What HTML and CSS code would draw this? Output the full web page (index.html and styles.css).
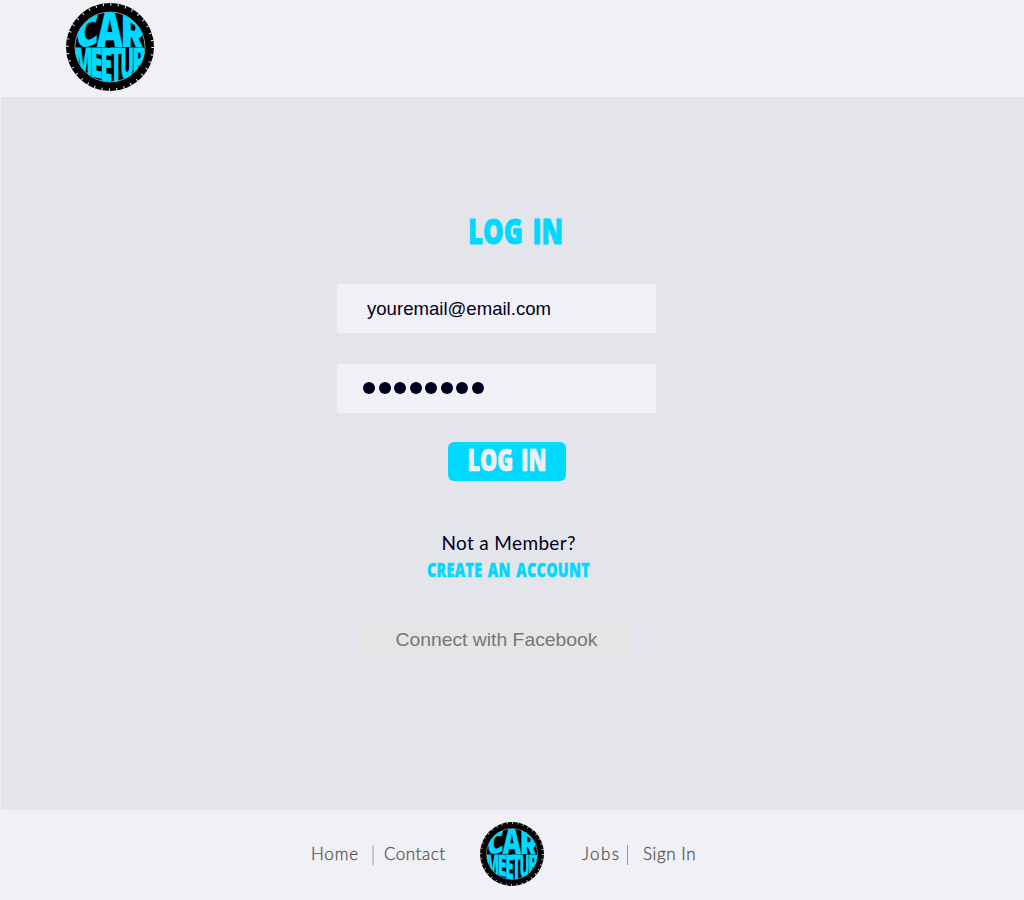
FILE: index.html
```html
<!DOCTYPE html>
<html lang="en">
<head>
<meta charset="utf-8">
<title>Car Meetup - Log In</title>
<link rel="stylesheet" href="styles.css">
</head>
<body>
<svg class="defs" width="0" height="0" aria-hidden="true">
  <defs>
    <clipPath id="upper"><path d="M27 132A105 105 0 0 1 237 132Z"/></clipPath>
    <clipPath id="lower"><path d="M27 133A105 105 0 0 0 237 133Z"/></clipPath>
    <symbol id="logo" viewBox="0 0 264 264">
      <circle cx="132" cy="132" r="132" fill="#000"/>
      <circle cx="132" cy="132" r="128" fill="none" stroke="#f0f0f5" stroke-width="8" stroke-dasharray="3 19.34"/>
      <circle cx="132" cy="132" r="105" fill="none" stroke="#d8d8d8" stroke-width="2"/>
      <g clip-path="url(#upper)" class="logo-type">
        <text transform="matrix(1 -.3 0 1.24 30 140)" textLength="68" lengthAdjust="spacingAndGlyphs">C</text>
        <text transform="matrix(1 0 0 1.46 93 132)" textLength="77" lengthAdjust="spacingAndGlyphs">A</text>
        <text transform="matrix(1 .42 0 1.44 163 127)" textLength="77" lengthAdjust="spacingAndGlyphs">R</text>
      </g>
      <g clip-path="url(#lower)" class="logo-type">
        <text transform="matrix(1 .15 0 1.2 24 210)" textLength="56" lengthAdjust="spacingAndGlyphs">M</text>
        <text transform="matrix(1 .25 0 1.28 72 218)" textLength="38" lengthAdjust="spacingAndGlyphs">E</text>
        <text transform="matrix(1 .12 0 1.4 103 232)" textLength="36" lengthAdjust="spacingAndGlyphs">E</text>
        <text transform="matrix(1 0 0 1.46 132 236)" textLength="37" lengthAdjust="spacingAndGlyphs">T</text>
        <text transform="matrix(1 -.25 0 1.35 163 233)" textLength="42" lengthAdjust="spacingAndGlyphs">U</text>
        <text transform="matrix(1 -.15 0 1.2 198 218)" textLength="42" lengthAdjust="spacingAndGlyphs">P</text>
      </g>
    </symbol>
  </defs>
</svg>
<header class="header">
  <svg class="logo" role="img" aria-label="Car Meetup"><use href="#logo"/></svg>
</header>
<main class="main">
  <svg class="title" viewBox="0 0 96 36"><text class="display title-text" x="0" y="31" textLength="95" lengthAdjust="spacingAndGlyphs">LOG IN</text></svg>
  <form class="form">
    <div class="field"><svg class="email" viewBox="0 0 190 30"><text x="0" y="21" textLength="184" lengthAdjust="spacingAndGlyphs">youremail@email.com</text></svg></div>
    <div class="field password"><i></i><i></i><i></i><i></i><i></i><i></i><i></i><i></i></div>
    <button class="login" type="button"><svg class="login-label" viewBox="0 0 80 39"><text class="display login-text" x="-0.5" y="29" textLength="79" lengthAdjust="spacingAndGlyphs">LOG IN</text></svg></button>
  </form>
  <svg class="signup" viewBox="0 0 166 52">
    <text class="member" x="14.5" y="20" textLength="134" lengthAdjust="spacing">Not a Member?</text>
    <text class="display create" x="0" y="47" textLength="163" lengthAdjust="spacingAndGlyphs">CREATE AN ACCOUNT</text>
  </svg>
  <button class="facebook" type="button"><svg class="facebook-label" viewBox="0 0 204 39"><text x="0.5" y="25.5" textLength="202" lengthAdjust="spacingAndGlyphs">Connect with Facebook</text></svg></button>
</main>
<footer class="footer">
  <nav class="links left">
    <svg class="home" viewBox="0 0 50 24"><text x="0" y="18" textLength="47">Home</text></svg>
    <span class="divider wide"></span>
    <svg class="contact" viewBox="0 0 62 24"><text x="0" y="18" textLength="61">Contact</text></svg>
  </nav>
  <svg class="logo small" role="img" aria-label="Car Meetup"><use href="#logo"/></svg>
  <nav class="links right">
    <svg class="jobs" viewBox="0 0 40 24"><text x="0" y="18" textLength="37">Jobs</text></svg>
    <span class="divider"></span>
    <svg class="sign" viewBox="0 0 56 24"><text x="0" y="18" textLength="52.5">Sign In</text></svg>
  </nav>
</footer>
</body>
</html>
```
FILE: styles.css
```css
* { box-sizing: border-box; }
body { margin: 0; height: 900px; display: flex; flex-direction: column; background: #f0f0f5; font-family: "Liberation Sans", sans-serif; overflow: hidden; }
svg { display: block; flex: none; overflow: visible; }
.defs { height: 0; }
.header { height: 97px; padding: 3px 0 0 66px; flex: none; }
.logo { width: 88px; height: 88px; }
.logo.small { width: 64px; height: 64px; margin-left: 34px; }
.logo-type { font: 800 100px "Open Sans", sans-serif; fill: #00d8ff; stroke: #00d8ff; stroke-width: 1px; }
.main { height: 713px; flex: none; margin-left: 1px; padding-top: 116px; background: #e4e5ea; }
.display { font-family: "Open Sans", sans-serif; font-weight: 800; fill: #00d8ff; }
.title { width: 96px; height: 36px; margin-left: 467px; }
.title-text { font-size: 36px; word-spacing: 4px; stroke: #00d8ff; stroke-width: .9px; }
.form { width: 319px; margin: 35px 0 0 336px; }
.field { height: 49px; margin-bottom: 31px; padding: 10px 0 0 30px; border-radius: 2px; background: #f0f0f5; }
.email { width: 190px; height: 30px; font-size: 19px; fill: #00001f; }
.password { display: flex; gap: 3.5px; margin-bottom: 29px; padding: 18px 0 0 26px; }
.password i { width: 12px; height: 12px; border-radius: 50%; background: #00001f; }
button { display: block; padding: 0; border: 0; }
.login { width: 118px; height: 39px; margin-left: 111px; padding-left: 19.5px; border-radius: 6px; background: #00d8ff; }
.login-label { width: 80px; height: 39px; }
.login-text { font-size: 29.5px; word-spacing: 3px; fill: #f0f0f5; stroke: #f0f0f5; stroke-width: .7px; }
.signup { width: 166px; height: 52px; margin: 49px 0 0 426px; }
.member { font: 19px Lato, sans-serif; fill: #00001f; }
.create { font-size: 19.5px; letter-spacing: .4px; word-spacing: 2px; stroke: #00d8ff; stroke-width: .4px; }
.facebook { width: 272px; height: 39px; margin: 38px 0 0 359px; padding-left: 35px; background: #e5e5e5; }
.facebook-label { width: 204px; height: 39px; font: 19px "Liberation Sans", sans-serif; fill: #777; }
.footer { display: flex; padding: 12px 0 0 311px; font: 300 17px Lato, sans-serif; fill: #555; }
.links text { stroke: #555; stroke-width: .3px; }
.links { display: flex; padding-top: 20px; }
.links svg { height: 24px; }
.divider { width: 1px; height: 20px; margin-top: 3px; background: #999; }
.divider.wide { width: 2px; background: #c8c8cc; }
.home { width: 50px; margin-right: 11px; }
.contact { width: 62px; margin-left: 10px; }
.right { margin-left: 38px; }
.jobs { width: 40px; margin-right: 5px; }
.sign { width: 56px; margin-left: 15px; }
```
